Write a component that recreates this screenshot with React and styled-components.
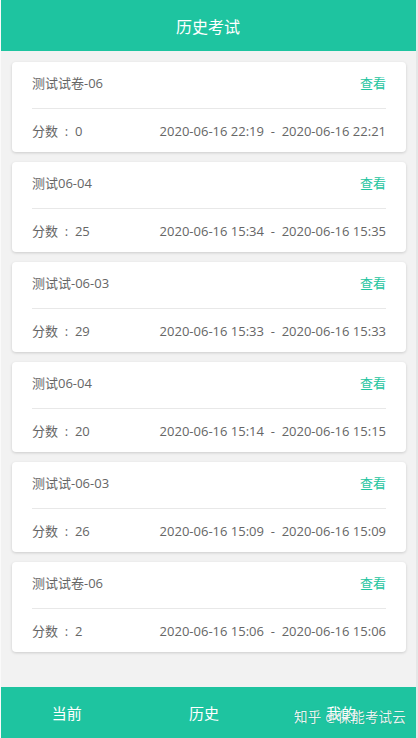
import React from "react";
import styled, { createGlobalStyle } from "styled-components";

const Global = createGlobalStyle`
  html, body { margin: 0; padding: 0; background: #f2f2f2; }
  body { font-family: "Open Sans", "Noto Sans CJK SC", sans-serif; }
  * { box-sizing: border-box; }
`;

const Page = styled.div`
  position: relative;
  width: 418px;
  height: 738px;
  background: #f2f2f2;
  display: flex;
  flex-direction: column;
  border-left: 1px solid #fafafa;
  border-right: 2px solid #e6e6e6;
  overflow: hidden;
`;

const Header = styled.header`
  height: 51px;
  flex: none;
  background: #1ec4a0;
  color: #fff;
  display: flex;
  align-items: center;
  justify-content: center;
  font-size: 16px;
  margin-left: -1px;
`;

const List = styled.main`
  flex: 1;
  display: flex;
  flex-direction: column;
  gap: 10px;
  padding: 11px 10px 0 11px;
`;

const Card = styled.div`
  background: #fff;
  border-radius: 4px;
  box-shadow: 0 1px 3px rgba(0, 0, 0, 0.16);
  padding: 0 20px;
  height: 90px;
  display: flex;
  flex-direction: column;
`;

const Row = styled.div`
  height: ${(p) => (p.$top ? "47px" : "43px")};
  padding-bottom: ${(p) => (p.$top ? "5px" : "0")};
  display: flex;
  align-items: center;
  justify-content: space-between;
  font-size: 13px;
  color: #666;
  border-bottom: ${(p) => (p.$top ? "1px solid #e8e8e8" : "none")};
`;

const Link = styled.span`
  color: #1ec4a0;
  font-size: 13px;
`;

const Score = styled.span`
  color: #666;
  white-space: pre;
`;

const Times = styled.span`
  color: #666;
  white-space: pre;
`;

const Footer = styled.nav`
  height: 51px;
  flex: none;
  background: #1ec4a0;
  display: grid;
  grid-template-columns: repeat(3, 1fr);
  align-items: center;
  margin-left: -1px;
  padding: 0 4px 0 0;
`;

const Tab = styled.div`
  color: #fff;
  font-size: 15px;
  text-align: center;
  margin-left: ${(p) => p.$shift || 0}px;
`;

const Watermark = styled.div`
  position: absolute;
  right: 10px;
  bottom: 12px;
  color: rgba(255, 255, 255, 0.92);
  font-size: 13.5px;
  letter-spacing: 0.2px;
  text-shadow: 0 0 1px rgba(0, 0, 0, 0.25);
`;

const data = [
  { name: "测试试卷-06", score: 0, start: "2020-06-16 22:19", end: "2020-06-16 22:21" },
  { name: "测试06-04", score: 25, start: "2020-06-16 15:34", end: "2020-06-16 15:35" },
  { name: "测试试-06-03", score: 29, start: "2020-06-16 15:33", end: "2020-06-16 15:33" },
  { name: "测试06-04", score: 20, start: "2020-06-16 15:14", end: "2020-06-16 15:15" },
  { name: "测试试-06-03", score: 26, start: "2020-06-16 15:09", end: "2020-06-16 15:09" },
  { name: "测试试卷-06", score: 2, start: "2020-06-16 15:06", end: "2020-06-16 15:06" },
];

export default function App() {
  return (
    <>
      <Global />
      <Page>
        <Header>历史考试</Header>
        <List>
          {data.map((d, i) => (
            <Card key={i}>
              <Row $top>
                <span>{d.name}</span>
                <Link>查看</Link>
              </Row>
              <Row>
                <Score>{`分数  :  ${d.score}`}</Score>
                <Times>{`${d.start}  -  ${d.end}`}</Times>
              </Row>
            </Card>
          ))}
        </List>
        <Footer>
          <Tab $shift={-4}>当前</Tab>
          <Tab $shift={-4}>历史</Tab>
          <Tab $shift={-4}>我的</Tab>
        </Footer>
        <Watermark>知乎 @保能考试云</Watermark>
      </Page>
    </>
  );
}
